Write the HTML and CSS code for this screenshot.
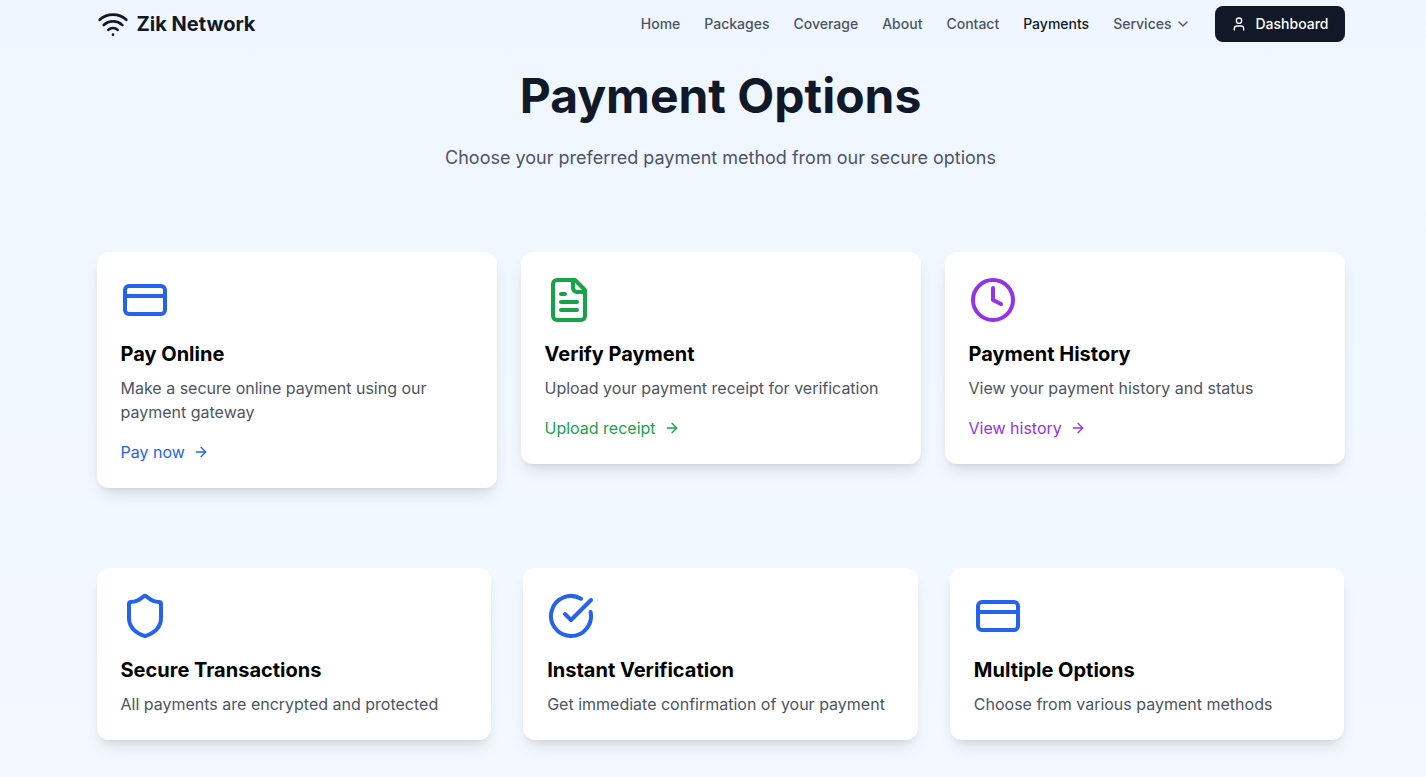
FILE: index.html
```html
<!doctype html>
<html lang="en">
<head>
  <meta charset="utf-8">
  <meta name="viewport" content="width=device-width, initial-scale=1">
  <title>Payment Options - Zik Network</title>
  <link rel="stylesheet" href="styles.css">
</head>
<body>
<header class="header">
  <div class="container header__inner">
    <a href="#" class="logo">
      <svg class="icon logo__icon" viewBox="0 0 24 24" aria-hidden="true">
        <path d="M12 20h.01"/>
        <path d="M2 8.82a15 15 0 0 1 20 0"/>
        <path d="M5 12.859a10 10 0 0 1 14 0"/>
        <path d="M8.5 16.429a5 5 0 0 1 7 0"/>
      </svg>
      <span>Zik Network</span>
    </a>
    <nav class="nav">
      <a href="#" class="nav__link">Home</a>
      <a href="#" class="nav__link">Packages</a>
      <a href="#" class="nav__link">Coverage</a>
      <a href="#" class="nav__link">About</a>
      <a href="#" class="nav__link">Contact</a>
      <a href="#" class="nav__link nav__link--active" aria-current="page">Payments</a>
      <button type="button" class="nav__link nav__dropdown">
        Services
        <svg class="icon icon--small" viewBox="0 0 24 24" aria-hidden="true"><path d="m6 9 6 6 6-6"/></svg>
      </button>
      <a href="#" class="button">
        <svg class="icon icon--small" viewBox="0 0 24 24" aria-hidden="true">
          <path d="M19 21v-2a4 4 0 0 0-4-4H9a4 4 0 0 0-4 4v2"/>
          <circle cx="12" cy="7" r="4"/>
        </svg>
        Dashboard
      </a>
    </nav>
  </div>
</header>

<main class="container main">
  <div class="hero">
    <h1 class="hero__title">Payment Options</h1>
    <p class="hero__text">Choose your preferred payment method from our secure options</p>
  </div>

  <section class="options">
    <div class="card card--blue">
      <svg class="icon card__icon" viewBox="0 0 24 24" aria-hidden="true">
        <rect width="20" height="14" x="2" y="5" rx="2"/>
        <path d="M2 10h20"/>
      </svg>
      <h3 class="card__title">Pay Online</h3>
      <p class="card__text">Make a secure online payment using our payment gateway</p>
      <a href="#" class="card__link">
        Pay now
        <svg class="icon icon--small" viewBox="0 0 24 24" aria-hidden="true"><path d="M5 12h14"/><path d="m12 5 7 7-7 7"/></svg>
      </a>
    </div>
    <div class="card card--green">
      <svg class="icon card__icon" viewBox="0 0 24 24" aria-hidden="true">
        <path d="M15 2H6a2 2 0 0 0-2 2v16a2 2 0 0 0 2 2h12a2 2 0 0 0 2-2V7Z"/>
        <path d="M14 2v4a2 2 0 0 0 2 2h4"/>
        <path d="M10 9H8"/>
        <path d="M16 13H8"/>
        <path d="M16 17H8"/>
      </svg>
      <h3 class="card__title">Verify Payment</h3>
      <p class="card__text">Upload your payment receipt for verification</p>
      <a href="#" class="card__link">
        Upload receipt
        <svg class="icon icon--small" viewBox="0 0 24 24" aria-hidden="true"><path d="M5 12h14"/><path d="m12 5 7 7-7 7"/></svg>
      </a>
    </div>
    <div class="card card--purple">
      <svg class="icon card__icon" viewBox="0 0 24 24" aria-hidden="true">
        <circle cx="12" cy="12" r="10"/>
        <polyline points="12 6 12 12 16 14"/>
      </svg>
      <h3 class="card__title">Payment History</h3>
      <p class="card__text">View your payment history and status</p>
      <a href="#" class="card__link">
        View history
        <svg class="icon icon--small" viewBox="0 0 24 24" aria-hidden="true"><path d="M5 12h14"/><path d="m12 5 7 7-7 7"/></svg>
      </a>
    </div>
  </section>

  <section class="features">
    <div class="card card--blue">
      <svg class="icon card__icon" viewBox="0 0 24 24" aria-hidden="true">
        <path d="M20 13c0 5-3.5 7.5-7.66 8.95a1 1 0 0 1-.67-.01C7.5 20.5 4 18 4 13V6a1 1 0 0 1 1-1c2 0 4.5-1.2 6.24-2.72a1.17 1.17 0 0 1 1.52 0C14.51 3.81 17 5 19 5a1 1 0 0 1 1 1z"/>
      </svg>
      <h3 class="card__title">Secure Transactions</h3>
      <p class="card__text">All payments are encrypted and protected</p>
    </div>
    <div class="card card--blue">
      <svg class="icon card__icon" viewBox="0 0 24 24" aria-hidden="true">
        <path d="M21.801 10A10 10 0 1 1 17 3.335"/>
        <path d="m9 11 3 3L22 4"/>
      </svg>
      <h3 class="card__title">Instant Verification</h3>
      <p class="card__text">Get immediate confirmation of your payment</p>
    </div>
    <div class="card card--blue">
      <svg class="icon card__icon" viewBox="0 0 24 24" aria-hidden="true">
        <rect width="20" height="14" x="2" y="5" rx="2"/>
        <path d="M2 10h20"/>
      </svg>
      <h3 class="card__title">Multiple Options</h3>
      <p class="card__text">Choose from various payment methods</p>
    </div>
  </section>
</main>
</body>
</html>
```
FILE: styles.css
```css
*, *:before, *:after {
  box-sizing: border-box;
}

body, h1, h3, p {
  margin: 0;
}

body {
  min-height: 100vh;
  padding-left: 15px;
  font-family: Inter, sans-serif;
  font-size: 16px;
  line-height: 24px;
  color: #000;
  background: linear-gradient(to bottom, #eff6ff, #fff 2400px) no-repeat;
}

a {
  color: inherit;
  text-decoration: none;
}

.container {
  max-width: 1280px;
  margin: 0 auto;
  padding: 0 16px;
}

.icon {
  display: block;
  flex-shrink: 0;
  fill: none;
  stroke: currentColor;
  stroke-width: 2;
  stroke-linecap: round;
  stroke-linejoin: round;
}

.icon--small {
  width: 16px;
  height: 16px;
}

/* Header */
.header__inner {
  display: flex;
  align-items: center;
  justify-content: space-between;
  min-height: 48px;
}

.logo {
  display: flex;
  align-items: center;
  gap: 8px;
  font-size: 20px;
  font-weight: 700;
  line-height: 28px;
  color: #111827;
}

.logo__icon {
  width: 32px;
  height: 32px;
}

.nav {
  display: flex;
  flex-wrap: wrap;
  align-items: center;
  gap: 0 24px;
  font-size: 14px;
  font-weight: 500;
  line-height: 20px;
}

.nav__link {
  color: #4b5563;
}

.nav__link:hover,
.nav__link--active {
  color: #111827;
}

.nav__dropdown {
  display: flex;
  align-items: center;
  gap: 4px;
  padding: 0;
  border: 0;
  background: none;
  font: inherit;
  cursor: pointer;
}

.button {
  display: flex;
  align-items: center;
  gap: 8px;
  padding: 8px 16px;
  border-radius: 8px;
  color: #fff;
  background: #111827;
}

/* Hero */
.hero {
  padding: 24px 0 80px;
  text-align: center;
}

.hero__title {
  margin-bottom: 24px;
  font-size: 48px;
  font-weight: 700;
  line-height: 48px;
  color: #111827;
}

.hero__text {
  font-size: 18px;
  line-height: 28px;
  color: #4b5563;
}

/* Cards */
.options,
.features {
  display: grid;
  grid-template-columns: repeat(3, 1fr);
  align-items: start;
}

.options {
  gap: 24px;
  margin-bottom: 80px;
}

.features {
  gap: 32px;
  padding-bottom: 32px;
}

.card {
  padding: 24px;
  border-radius: 12px;
  background: #fff;
  box-shadow: 0 10px 15px -3px rgba(0, 0, 0, .1), 0 4px 6px -4px rgba(0, 0, 0, .1);
}

.card__icon {
  width: 48px;
  height: 48px;
  margin-bottom: 16px;
}

.card__title {
  margin-bottom: 8px;
  font-size: 20px;
  font-weight: 700;
  line-height: 28px;
}

.card__text {
  color: #4b5563;
}

.card__link {
  display: inline-flex;
  align-items: center;
  gap: 8px;
  margin-top: 16px;
  vertical-align: top;
}

.card--blue .card__icon,
.card--blue .card__link {
  color: #2563eb;
}

.card--green .card__icon,
.card--green .card__link {
  color: #16a34a;
}

.card--purple .card__icon,
.card--purple .card__link {
  color: #9333ea;
}

@media (max-width: 900px) {
  .header__inner {
    flex-wrap: wrap;
  }

  .options,
  .features {
    grid-template-columns: 1fr;
  }
}
```
